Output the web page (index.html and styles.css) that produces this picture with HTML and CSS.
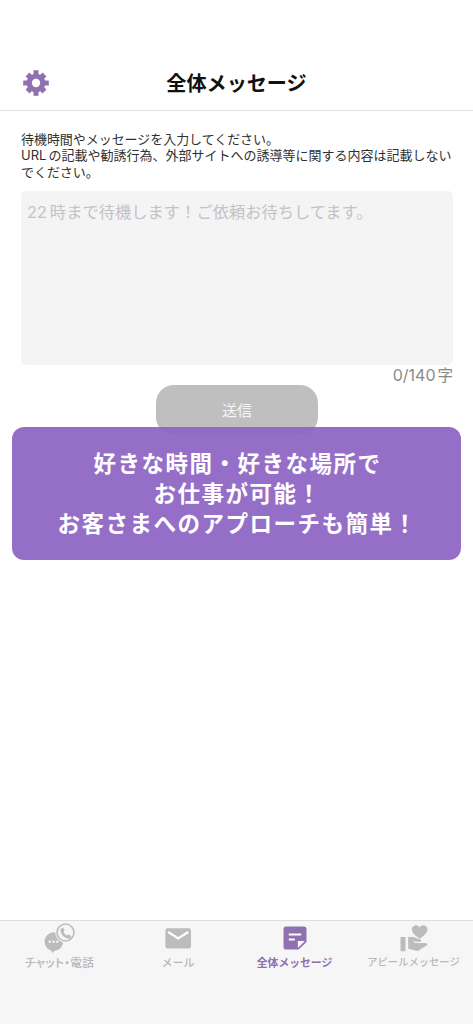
FILE: index.html
```
<!DOCTYPE html>
<html lang="ja">
<head>
<meta charset="utf-8">
<title>全体メッセージ</title>
<link rel="stylesheet" href="styles.css">
</head>
<body>
<div class="app">
  <header class="header">
    <svg class="gear" viewBox="-13 -13 26 26">
      <g fill="#8f70b0">
        <path d="M-2.500-12.800h5v25.600h-5z"/>
        <path d="M-2.700-12h5.400v24h-5.400z" transform="rotate(45)"/>
        <path d="M-2.500-12.800h5v25.600h-5z" transform="rotate(90)"/>
        <path d="M-2.700-12h5.400v24h-5.400z" transform="rotate(135)"/>
        <circle r="9.300"/>
      </g>
      <circle r="4.200" fill="#fff"/>
    </svg>
    <h1 class="title">全体メッセージ</h1>
  </header>
  <main class="content">
    <p class="note"><span>待機時間やメッセージを入力してください。</span><span class="wide"><span class="latin">URL</span>の記載や勧誘行為、外部サイトへの誘導等に関する内容は記載しない</span><span>でください。</span></p>
    <div class="field"><span class="num">22</span>時まで待機します！ご依頼お待ちしてます。</div>
    <div class="counter"><span class="count">0/140</span>字</div>
    <div class="send">送信</div>
    <div class="banner"><span>好きな時間・好きな場所で</span><span>お仕事が可能！</span><span>お客さまへのアプローチも簡単！</span></div>
  </main>
  <nav class="nav">
    <div class="tab chat">
      <svg class="icon" viewBox="0 0 32 32">
        <circle cx="9.800" cy="20.600" r="9.300" fill="#bcbcbc"/>
        <path d="M4.500 27.500l4.700 4.500 1.400-3z" fill="#bcbcbc"/>
        <g fill="#fff"><rect x="4.700" y="19.700" width="2" height="2"/><rect x="8.500" y="19.700" width="2" height="2"/><rect x="12.300" y="19.700" width="2" height="2"/></g>
        <circle cx="21.500" cy="11.500" r="10.300" fill="#f6f6f6"/>
        <circle cx="21.500" cy="11.500" r="8.500" fill="#f6f6f6" stroke="#bcbcbc" stroke-width="1.600"/>
        <path d="M17 7.400l2-1 1.700 3.200-1.200 1.400q.9 2.200 3.300 3.500l1.600-1.200 2.900 2-.9 1.900q-1.600 1-3.700.1-4.700-2-6.200-6.600-.4-2.100.5-3.300z" fill="#bcbcbc"/>
      </svg>
      <span class="label">チャット・電話</span>
    </div>
    <div class="tab mail">
      <svg class="icon" viewBox="0 0 32 32">
        <rect x="3.400" y="7.200" width="25.600" height="20.300" rx="2.200" fill="#bcbcbc"/>
        <path d="M6.200 11l10 6.500 10-6.500" fill="none" stroke="#fff" stroke-width="2.200"/>
      </svg>
      <span>メール</span>
    </div>
    <div class="tab all">
      <svg class="icon" viewBox="0 0 32 32">
        <path d="M7.100 5.600h17.800a2.600 2.600 0 0 1 2.600 2.600v12.700l-7.800 7.700H7.100A2.600 2.600 0 0 1 4.500 26V8.200a2.600 2.600 0 0 1 2.600-2.600z" fill="#8f70b0"/>
        <path d="M9.800 13.500h12.400M9.800 18.500h6" stroke="#fff" stroke-width="2.200"/>
        <path d="M18.900 26.900v-7h7z" fill="#fff"/>
      </svg>
      <span>全体メッセージ</span>
    </div>
    <div class="tab appeal">
      <svg class="icon" viewBox="0 0 32 32">
        <g fill="#bcbcbc">
          <path d="M22.700 17.800C17.600 14 14.900 11.500 14.900 8.700c0-4.600 5.500-6.100 7.800-2.200 2.300-3.900 7.800-2.400 7.800 2.200 0 2.800-2.700 5.300-7.800 9.100z"/>
          <path d="M3.500 15.900h5v14.300h-5zM11.200 15.900h5.200l6.900 2.700q1.100.6.900 2.200h-5.700l-1.900-.7-.3.900 2.200.9h9.800q2 .2 2.200 2.200l-9.700 6-9.600-2.300z"/>
        </g>
      </svg>
      <span>アピールメッセージ</span>
    </div>
  </nav>
</div>
</body>
</html>
```
FILE: styles.css
```
* { box-sizing: border-box; }
body { margin: 0; background: #fff; font-family: "Noto Sans CJK JP", sans-serif; }
.app { width: 473px; height: 1024px; display: flex; flex-direction: column; overflow: hidden; }
.header { flex: none; height: 111px; padding-top: 55px; border-bottom: 1.500px solid #dedede; display: grid; grid-template-columns: 72px 1fr 72px; align-items: center; }
.gear { width: 26px; height: 26px; margin-left: 23px; }
.title { margin: 0; font-size: 20.100px; line-height: 28px; font-weight: 700; text-align: center; white-space: nowrap; color: #111; }
.content { flex: 1; min-height: 0; padding: 20px 20px 0 21px; display: flex; flex-direction: column; }
.note { margin: 0; height: 60px; display: flex; flex-direction: column; font-size: 13px; line-height: 16.300px; letter-spacing: -0.050px; color: #303030; white-space: nowrap; }
.wide { letter-spacing: 0; }
.latin { font-family: Inter, sans-serif; margin-right: 2px; }
.field { flex: none; width: 432px; height: 174px; padding: 8px 6px; border-radius: 5px; background: #f4f4f4; color: #c3c3c3; font-size: 16.300px; line-height: 24px; white-space: nowrap; }
.num { font-family: Inter, sans-serif; margin-right: 3px; }
.counter { height: 20px; line-height: 18px; font-size: 15.500px; color: #8a8a8a; text-align: right; white-space: nowrap; }
.count { font-family: Inter, sans-serif; font-size: 16px; margin-right: 2px; }
.send { flex: none; width: 162px; height: 50px; margin-left: 135px; border-radius: 18px; background: #bfbfbf; color: #f5f5f5; font-size: 15px; line-height: 50px; text-align: center; }
.banner { flex: none; z-index: 1; width: 449px; height: 133px; margin: -8.500px 0 0 -9px; padding: 20px 0 0 2px; border-radius: 12px; background: rgba(142, 102, 196, .94); color: #fff; display: flex; flex-direction: column; align-items: center; font-size: 22.500px; line-height: 30.300px; letter-spacing: 1.500px; font-weight: 700; white-space: nowrap; }
.nav { flex: none; height: 104px; border-top: 1.500px solid #dedede; background: #f6f6f6; display: grid; grid-template-columns: 119px 118px 115px 121px; }
.tab { display: flex; flex-direction: column; align-items: center; color: #b8b8b8; font-size: 11px; line-height: 16px; font-weight: 500; white-space: nowrap; }
.icon { width: 32px; height: 32px; margin-bottom: 1px; }
.chat { font-size: 11.600px; }
.label { font-feature-settings: "halt" 0, "palt" 1; letter-spacing: .3px; }
.all { color: #8f70b0; font-size: 10.800px; font-weight: 700; }
.appeal { padding-left: 2px; font-size: 10.300px; }
.appeal .icon { margin-left: -2px; }
```
